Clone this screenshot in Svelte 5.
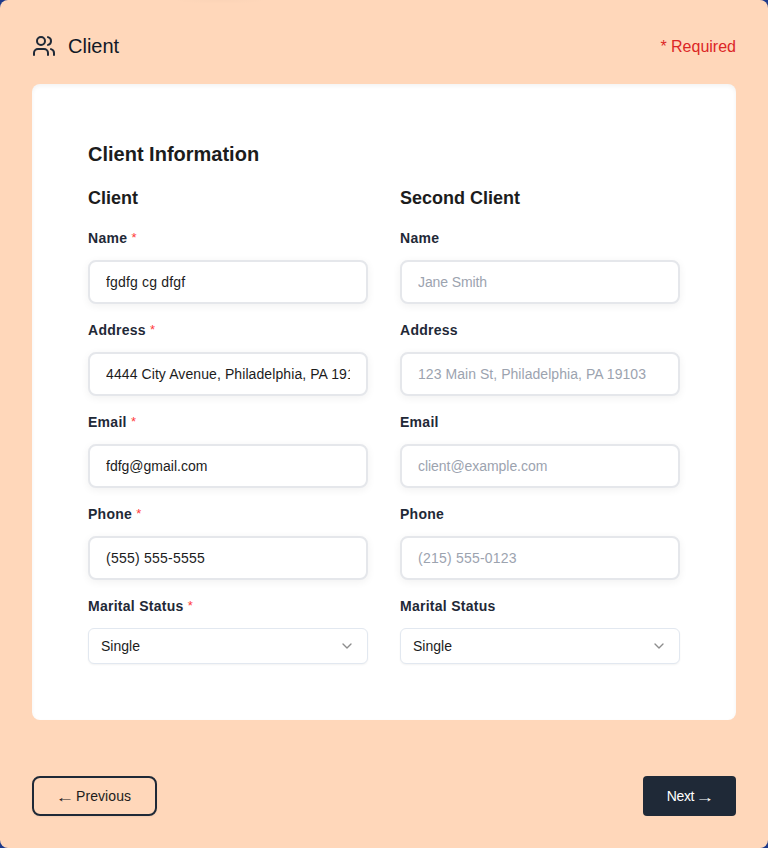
<script>
  const columns = [
    {
      title: 'Client',
      required: true,
      fields: [
        { label: 'Name', value: 'fgdfg cg dfgf', tracking: 0.18 },
        { label: 'Address', value: '4444 City Avenue, Philadelphia, PA 19103', tracking: 0.09 },
        { label: 'Email', value: 'fdfg@gmail.com', tracking: 0 },
        { label: 'Phone', value: '(555) 555-5555', tracking: 0.24 }
      ]
    },
    {
      title: 'Second Client',
      required: false,
      fields: [
        { label: 'Name', placeholder: 'Jane Smith', tracking: -0.1 },
        { label: 'Address', placeholder: '123 Main St, Philadelphia, PA 19103', tracking: 0.05 },
        { label: 'Email', placeholder: 'client@example.com', tracking: -0.05 },
        { label: 'Phone', placeholder: '(215) 555-0123', tracking: 0.22 }
      ]
    }
  ];
</script>

<div class="panel">
  <header>
    <div class="heading">
      <svg width="24" height="24" viewBox="0 0 24 24" fill="none" stroke="currentColor" stroke-width="2" stroke-linecap="round" stroke-linejoin="round">
        <path d="M16 21v-2a4 4 0 0 0-4-4H6a4 4 0 0 0-4 4v2" />
        <circle cx="9" cy="7" r="4" />
        <path d="M22 21v-2a4 4 0 0 0-3-3.87" />
        <path d="M16 3.13a4 4 0 0 1 0 7.75" />
      </svg>
      <h1>Client</h1>
    </div>
    <span class="required">* Required</span>
  </header>

  <section class="card">
    <h2>Client Information</h2>
    <div class="columns">
      {#each columns as column}
        <div class="column">
          <h3>{column.title}</h3>
          {#each column.fields as field}
            <label class="field">
              <span class="label">{field.label}{#if column.required}{' '}<span class="star">*</span>{/if}</span>
              <input type="text" value={field.value ?? ''} placeholder={field.placeholder ?? ''} style="letter-spacing: {field.tracking}px" />
            </label>
          {/each}
          <div class="field">
            <span class="label">Marital Status{#if column.required}{' '}<span class="star">*</span>{/if}</span>
            <button type="button" class="select">
              <span>Single</span>
              <svg width="16" height="16" viewBox="0 0 24 24" fill="none" stroke="currentColor" stroke-width="2" stroke-linecap="round" stroke-linejoin="round">
                <path d="m6 9 6 6 6-6" />
              </svg>
            </button>
          </div>
        </div>
      {/each}
    </div>
  </section>

  <footer>
    <button type="button" class="previous"><span class="arrow">←</span> <span>Previous</span></button>
    <button type="button" class="next"><span>Next</span> <span class="arrow">→</span></button>
  </footer>
</div>

<style>
  :global(body) {
    background: #1e3a8a;
  }
  .panel, .panel * {
    box-sizing: border-box;
  }
  .panel {
    height: 848px;
    padding: 32px;
    border-radius: 8px;
    background: radial-gradient(50px 4px at 220px 0, rgb(0 0 0 / 0.015), transparent), #ffd7ba;
    color: #1c1c1c;
    font-family: "Liberation Sans", Arial, sans-serif;
    font-size: 14px;
    line-height: 20px;
  }
  header {
    display: flex;
    align-items: center;
    justify-content: space-between;
    height: 28px;
    margin-bottom: 24px;
  }
  .heading {
    display: flex;
    align-items: center;
    gap: 12px;
    color: #1f2937;
  }
  h1, h2, h3 {
    margin: 0;
    line-height: 28px;
  }
  h1 {
    color: #111827;
    font-size: 20px;
    font-weight: 400;
  }
  .required {
    padding-top: 2px;
    color: #dc2626;
    font-size: 16px;
    line-height: 24px;
  }
  .card {
    height: 636px;
    padding: 56px;
    border-radius: 8px;
    background: #fff;
    box-shadow: inset 0 2px 4px 0 rgb(0 0 0 / 0.05);
  }
  h2 {
    margin-bottom: 16px;
    font-size: 20px;
    font-weight: 600;
  }
  h3 {
    font-size: 18px;
    font-weight: 600;
  }
  .columns {
    display: grid;
    grid-template-columns: 1fr 1fr;
    gap: 32px;
  }
  .column {
    display: flex;
    flex-direction: column;
    gap: 16px;
    min-width: 0;
  }
  .field {
    display: flex;
    flex-direction: column;
    gap: 12px;
  }
  .label {
    color: #1f2937;
    font-weight: 600;
    letter-spacing: 0.27px;
  }
  .star {
    color: #ff3b3b;
    font-size: 13px;
    font-weight: 400;
    line-height: 1;
    vertical-align: 1px;
  }
  input, button {
    margin: 0;
    font: inherit;
  }
  input {
    width: 100%;
    height: 44px;
    padding: 8px 16px;
    border: 2px solid #e5e7eb;
    border-radius: 8px;
    outline: none;
    background: #fff;
    color: #1c1c1c;
    box-shadow: 0 2px 8px rgb(0 0 0 / 0.06);
  }
  input::placeholder {
    color: #9ca3af;
    opacity: 1;
  }
  .select {
    display: flex;
    align-items: center;
    justify-content: space-between;
    height: 36px;
    padding: 0 12px;
    border: 1px solid #e2e8f0;
    border-radius: 6px;
    background: #fff;
    color: #1c1c1c;
    box-shadow: 0 1px 2px rgb(0 0 0 / 0.05);
  }
  .select svg {
    color: #8d8d8d;
  }
  footer {
    display: flex;
    justify-content: space-between;
    margin-top: 56px;
  }
  footer button {
    display: flex;
    align-items: center;
    gap: 4px;
    height: 40px;
    padding: 0 24px;
  }
  .arrow {
    width: 14px;
    letter-spacing: 0;
    transform: translateY(0.5px) scaleX(1.35);
  }
  .previous {
    border: 2px solid #1f2937;
    border-radius: 8px;
    background: transparent;
    color: #1c1c1c;
    letter-spacing: 0.08px;
    box-shadow: 0 1px 2px rgb(0 0 0 / 0.05);
  }
  .next {
    border: 0;
    border-radius: 4px;
    background: #1f2937;
    color: #fff;
    letter-spacing: -0.4px;
  }
</style>
